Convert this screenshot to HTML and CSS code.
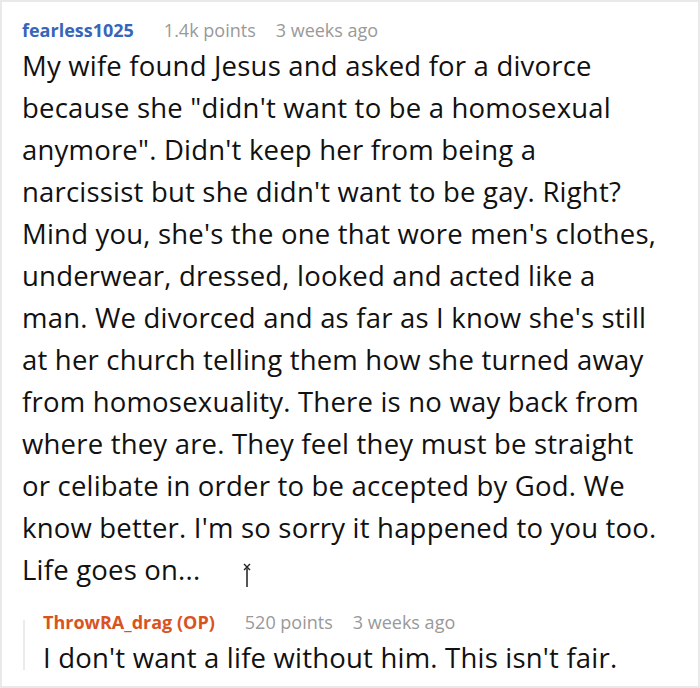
FILE: index.html
```html
<!DOCTYPE html>
<html>
<head>
<meta charset="utf-8">
<link rel="stylesheet" href="styles.css">
</head>
<body>
<div class="frame">
  <div class="comment">
    <div class="meta">
      <span class="author">fearless1025</span>
      <span class="info">1.4k points</span>
      <span class="info">3 weeks ago</span>
    </div>
    <p class="text">My wife found Jesus and asked for a divorce<br>because she "didn't want to be a homosexual<br>anymore". Didn't keep her from being a<br>narcissist but she didn't want to be gay. Right?<br>Mind you, she's the one that wore men's clothes,<br>underwear, dressed, looked and acted like a<br>man. We divorced and as far as I know she's still<br>at her church telling them how she turned away<br>from homosexuality. There is no way back from<br>where they are. They feel they must be straight<br>or celibate in order to be accepted by God. We<br>know better. I'm so sorry it happened to you too.<br>Life goes on...</p>
    <svg class="cursor" width="8" height="24" viewBox="0 0 8 24">
      <path d="M1 1 L7 7 M7 1 L1 7" stroke="#222" stroke-width="1.4"/>
      <rect x="3" y="5" width="2" height="19" fill="#555"/>
    </svg>
  </div>
  <div class="reply">
    <div class="meta">
      <span class="author op">ThrowRA_drag (OP)</span>
      <span class="info">520 points</span>
      <span class="info">3 weeks ago</span>
    </div>
    <p class="text">I don't want a life without him. This isn't fair.</p>
  </div>
</div>
</body>
</html>
```

FILE: styles.css
```css
html, body {
  margin: 0;
  padding: 0;
  background: #fff;
}
.frame {
  box-sizing: border-box;
  width: 700px;
  height: 688px;
  border: 2px solid #e9e9e9;
  padding: 14px 6px 0 20px;
  font-family: "Open Sans", "Noto Sans", sans-serif;
  color: #111;
  overflow: hidden;
}
.comment {
  position: relative;
}
.meta {
  display: flex;
  font-size: 18px;
  line-height: 28px;
  height: 29px;
  white-space: nowrap;
}
.author {
  font-weight: 700;
  color: #3666b9;
  margin-right: 30px;
}
.author.op {
  color: #d9531e;
}
.info {
  color: #999;
  margin-right: 20px;
}
.text {
  margin: 0;
  font-size: 27.5px;
  line-height: 42px;
  letter-spacing: 0.2px;
  white-space: nowrap;
}
.cursor {
  position: absolute;
  left: 221px;
  top: 547px;
}
.reply {
  position: relative;
  margin-top: 17px;
  padding-left: 21px;
}
.reply::before {
  content: "";
  position: absolute;
  left: 1px;
  top: 12px;
  width: 2px;
  height: 50px;
  background: #ebebeb;
}
```
